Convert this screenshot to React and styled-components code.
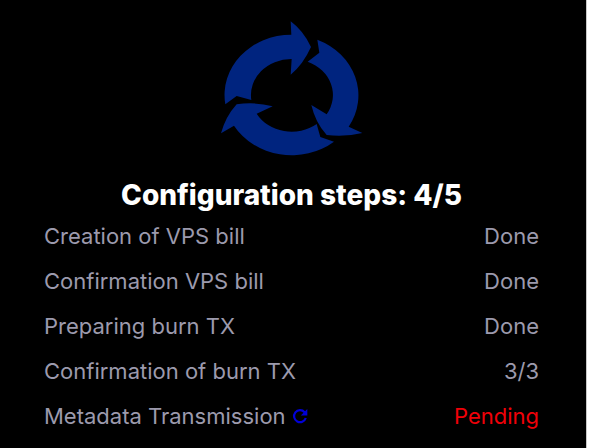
import React from "react";
import styled, { createGlobalStyle } from "styled-components";

const GlobalStyle = createGlobalStyle`
  * { box-sizing: border-box; }
  body {
    margin: 0;
    background: #fff;
    font-family: Inter, "Open Sans", sans-serif;
  }
`;

const Panel = styled.main`
  min-height: 100vh;
  margin-right: 2px;
  padding: 20px 47px 0 44px;
  background: #000;
  border-right: 1px solid #c8c8c8;
`;

const CycleIcon = styled.svg`
  display: block;
  width: 143px;
  height: 137px;
  margin: 0 auto;
  fill: #00247f;
`;

const Title = styled.h1`
  margin: 20px 0 0;
  font-size: 28px;
  line-height: 36px;
  font-weight: 800;
  text-align: center;
  white-space: nowrap;
  color: #fff;
`;

const Steps = styled.dl`
  margin: 0;
`;

const Step = styled.div`
  display: flex;
  align-items: center;
  justify-content: space-between;
  height: 45px;
  font-size: 22px;
  line-height: 28px;
  white-space: nowrap;
  color: #9c9aad;
`;

const StepName = styled.dt`
  display: flex;
  align-items: center;
  gap: 6px;
`;

const StepStatus = styled.dd`
  margin: 0;
  color: ${(p) => (p.$pending ? "#f00008" : "inherit")};
`;

const RefreshButton = styled.button`
  display: flex;
  padding: 0;
  border: 0;
  background: none;
  color: #0000d8;
  cursor: pointer;
`;

const steps = [
  { name: "Creation of VPS bill", status: "Done" },
  { name: "Confirmation VPS bill", status: "Done" },
  { name: "Preparing burn TX", status: "Done" },
  { name: "Confirmation of burn TX", status: "3/3" },
  { name: "Metadata Transmission", status: "Pending", pending: true },
];

function Cycle() {
  return (
    <CycleIcon viewBox="30 30 429 411" aria-hidden="true">
      <path d="M46 283 A201 181 0 0 1 244 74 L242 34 Q280 62 303 111 Q279 164 242 194 L245 147 A121 108 0 0 0 124 270 L80 258 Z" />
      <path d="M322 89 A201 181 0 0 1 416 350 L457 369 Q403 382 350 375 Q316 338 304 285 L350 313 A121 108 0 0 0 293 155 L328 128 Z" />
      <path d="M372 395 A201 181 0 0 1 72 347 L33 370 Q47 319 80 283 Q136 275 188 289 L140 311 A121 108 0 0 0 320 342 L331 381 Z" />
    </CycleIcon>
  );
}

function Refresh() {
  return (
    <RefreshButton type="button" aria-label="Refresh">
      <svg width="16" height="16" viewBox="0 0 16 16" aria-hidden="true">
        <path d="M12.6 4.2 A6 6 0 1 0 13.8 10" fill="none" stroke="currentColor" strokeWidth="2.2" />
        <path d="M15.3 1 V7.4 H8.8 Z" fill="currentColor" />
      </svg>
    </RefreshButton>
  );
}

export default function App() {
  return (
    <>
      <GlobalStyle />
      <Panel>
        <Cycle />
        <Title>Configuration steps: 4/5</Title>
        <Steps>
          {steps.map((s) => (
            <Step key={s.name}>
              <StepName>
                {s.name}
                {s.pending && <Refresh />}
              </StepName>
              <StepStatus $pending={s.pending}>{s.status}</StepStatus>
            </Step>
          ))}
        </Steps>
      </Panel>
    </>
  );
}
